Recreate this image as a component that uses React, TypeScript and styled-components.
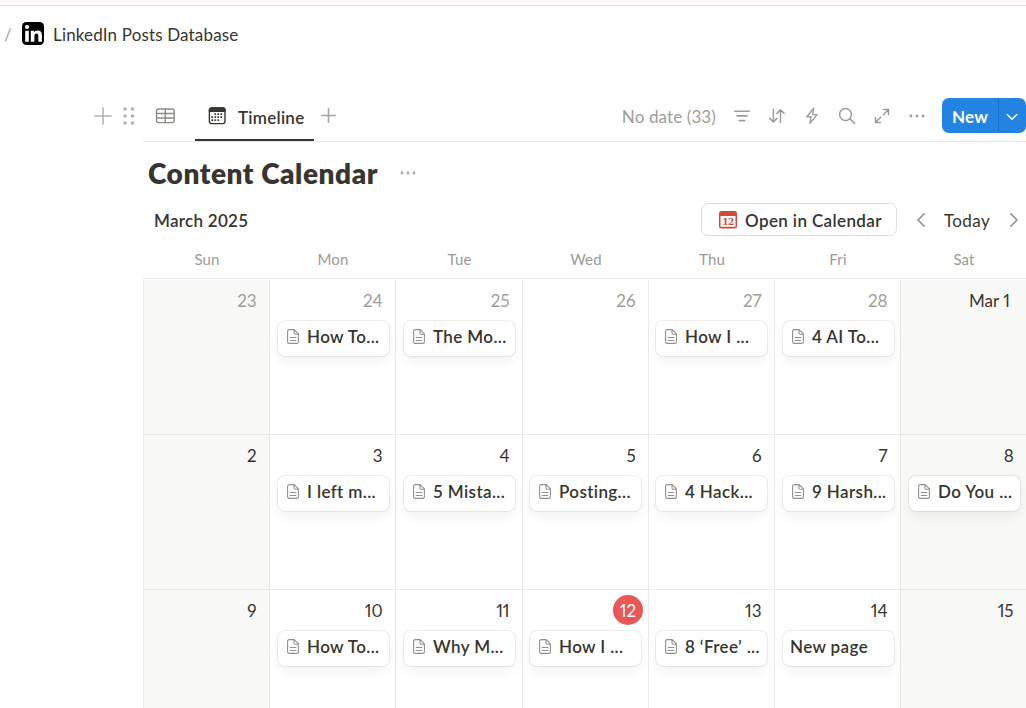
import styled, { createGlobalStyle, css } from "styled-components";

type Entry = { day: string; muted?: boolean; today?: boolean; page?: string; plain?: boolean };

const weekdays = ["Sun", "Mon", "Tue", "Wed", "Thu", "Fri", "Sat"];

const weeks: Entry[][] = [
  [
    { day: "23", muted: true },
    { day: "24", muted: true, page: "How To..." },
    { day: "25", muted: true, page: "The Mo..." },
    { day: "26", muted: true },
    { day: "27", muted: true, page: "How I ..." },
    { day: "28", muted: true, page: "4 AI To..." },
    { day: "Mar 1" },
  ],
  [
    { day: "2" },
    { day: "3", page: "I left m..." },
    { day: "4", page: "5 Mista..." },
    { day: "5", page: "Posting..." },
    { day: "6", page: "4 Hack..." },
    { day: "7", page: "9 Harsh..." },
    { day: "8", page: "Do You ..." },
  ],
  [
    { day: "9" },
    { day: "10", page: "How To..." },
    { day: "11", page: "Why M..." },
    { day: "12", today: true, page: "How I ..." },
    { day: "13", page: "8 ‘Free’ ..." },
    { day: "14", page: "New page", plain: true },
    { day: "15" },
  ],
];

const PlusIcon = ({ size }: { size: number }) => (
  <Icon width={size} height={size} viewBox={`0 0 ${size} ${size}`} strokeWidth="1.6">
    <path d={`M${size / 2} .8v${size - 1.6}M.8 ${size / 2}h${size - 1.6}`} />
  </Icon>
);

const DotsIcon = () => (
  <Icon width="16" height="4" viewBox="0 0 16 4" fill="currentColor" stroke="none">
    <circle cx="2" cy="2" r="1.4" />
    <circle cx="8" cy="2" r="1.4" />
    <circle cx="14" cy="2" r="1.4" />
  </Icon>
);

const PageIcon = () => (
  <Icon width="12" height="15" viewBox="0 0 12 15" strokeWidth="1.1">
    <path d="M2.3.6h4.9l4.2 4.3v7.8c0 1.1-.6 1.7-1.7 1.7H2.3C1.2 14.4.6 13.8.6 12.7V2.3C.6 1.2 1.2.6 2.3.6zM7 .8v3.3c0 .7.4 1.1 1.1 1.1h3.1M3.2 8.5h5.6M3.2 11.5h5.6" />
  </Icon>
);

const Chevron = ({ flip }: { flip?: boolean }) => (
  <ChevronIcon width="8" height="14" viewBox="0 0 8 14" strokeWidth="1.6">
    <path d={flip ? "M.8.8 7 7 .8 13.2" : "M7.2.8 1 7l6.2 6.2"} />
  </ChevronIcon>
);

const App = () => {
  return (
    <Page>
      <GlobalStyle />
      <TopStrip />
      <Breadcrumb>
        <Slash>/</Slash>
        <Logo width="22" height="23" viewBox="0 0 22 23">
          <rect width="22" height="23" rx="4.5" fill="#000" />
          <g fill="#fff">
            <circle cx="5" cy="5" r="2.1" />
            <path d="M3.2 8.7h3.6v11H3.2zM8.8 8.7h3.4v1.5c.7-1.1 1.9-1.8 3.5-1.8 3 0 4.2 1.9 4.2 4.9v6.4h-3.6v-5.8c0-1.6-.4-2.5-1.7-2.5-1.5 0-2.2.9-2.2 2.5v5.8H8.8z" />
          </g>
        </Logo>
        <Crumb>LinkedIn Posts Database</Crumb>
      </Breadcrumb>

      <Toolbar>
        <RowControls>
          <PlusIcon size={18} />
          <Icon width="12" height="18" viewBox="0 0 12 18" fill="currentColor" stroke="none">
            {[2, 9, 16].map((y) => (
              <g key={y}>
                <circle cx="2" cy={y} r="1.8" />
                <circle cx="9.5" cy={y} r="1.8" />
              </g>
            ))}
          </Icon>
        </RowControls>
        <TabBar>
          <TableTab>
            <Icon width="20" height="16" viewBox="0 0 20 16" strokeWidth="1.4">
              <rect x="1.5" y="1" width="17.6" height="13.6" rx="2" />
              <path d="M1.5 5.5h17.6M1.5 10h17.6M10.3 1v13.6" />
            </Icon>
          </TableTab>
          <ActiveTab>
            <Icon width="18" height="18" viewBox="0 0 18 18" strokeWidth="1.4">
              <rect x="1.4" y="1" width="15.6" height="15.6" rx="2.3" />
              <path d="M.8 4.9V3C.8 1.3 1.7.3 3.2.3h12c1.5 0 2.4 1 2.4 2.7v1.9z" fill="currentColor" stroke="none" />
              <g fill="currentColor" stroke="none">
                {[6.3, 9.3, 12.3].map((y, row) =>
                  [3.4, 6.4, 9.4, 12.4].slice(row === 0 ? 1 : 0, row === 2 ? 3 : 4).map((x) => (
                    <rect key={`${x}-${y}`} x={x} y={y} width="1.7" height="1.7" />
                  ))
                )}
              </g>
            </Icon>
            <TabLabel>Timeline</TabLabel>
          </ActiveTab>
          <AddView>
            <PlusIcon size={15} />
          </AddView>
          <Tools>
            <NoDate>No date (33)</NoDate>
            <Tool>
              <Icon width="16" height="14" viewBox="0 0 16 14" strokeWidth="1.6">
                <path d="M.8 2.2h14.4M3 6.9h10M5.3 11.6h5.4" />
              </Icon>
            </Tool>
            <Tool>
              <Icon width="16" height="16" viewBox="0 0 16 16" strokeWidth="1.5">
                <path d="M4.4 1.3v12.5M.8 10.4l3.6 3.6L8 10.4M11.5 14.5V2M7.9 5.4l3.6-3.6 3.6 3.6" />
              </Icon>
            </Tool>
            <Tool>
              <Icon width="14" height="18" viewBox="0 0 14 18" strokeWidth="1.4">
                <path d="M8.7 1.3 1.8 9.8h4.3l-1.2 6.6 7.2-8.8H7.7z" />
              </Icon>
            </Tool>
            <Tool>
              <Icon width="18" height="18" viewBox="0 0 18 18" strokeWidth="1.5">
                <circle cx="7.5" cy="7.5" r="5.9" />
                <path d="m11.9 11.9 4.7 4.5" />
              </Icon>
            </Tool>
            <Tool>
              <Icon width="16" height="16" viewBox="0 0 16 16" strokeWidth="1.5">
                <path d="M9.5 1.6h5v5M14.3 1.8l-5 5M6.5 14.5h-5v-5M1.7 14.3l5-5" />
              </Icon>
            </Tool>
            <Tool>
              <DotsIcon />
            </Tool>
            <NewButton>
              <NewLabel>New</NewLabel>
              <NewMore>
                <Icon width="12" height="8" viewBox="0 0 12 8" strokeWidth="1.6">
                  <path d="M1.2 1.5 6 6.2l4.8-4.7" />
                </Icon>
              </NewMore>
            </NewButton>
          </Tools>
        </TabBar>
      </Toolbar>

      <Content>
        <TitleRow>
          <Title>Content Calendar</Title>
          <DotsIcon />
        </TitleRow>
        <MonthRow>
          <Month>March 2025</Month>
          <OpenButton>
            <svg width="18" height="18" viewBox="0 0 18 18">
              <rect width="18" height="17.5" rx="2.5" fill="#d3483e" />
              <path d="M1.5 5h15v10.8h-15z" fill="#fff" />
              <BadgeText x="9" y="14" textAnchor="middle">
                12
              </BadgeText>
            </svg>
            <OpenLabel>Open in Calendar</OpenLabel>
          </OpenButton>
          <Chevron />
          <Today>Today</Today>
          <Chevron flip />
        </MonthRow>
        <WeekHeader>
          {weekdays.map((name) => (
            <div key={name}>{name}</div>
          ))}
        </WeekHeader>
        <Grid>
          {weeks.map((week) =>
            week.map((entry, i) => (
              <Cell key={entry.day} $weekend={i === 0 || i === 6}>
                <DayRow>
                  <Day $muted={entry.muted} $today={entry.today} $firstOfMonth={entry.day.length > 2}>
                    {entry.day}
                  </Day>
                </DayRow>
                {entry.page && (
                  <Card $plain={entry.plain} $inset={i === 3 || i === 4 ? 7 : 8}>
                    {!entry.plain && <PageIcon />}
                    <span>{entry.page}</span>
                  </Card>
                )}
              </Cell>
            ))
          )}
        </Grid>
      </Content>
    </Page>
  );
};

const GlobalStyle = createGlobalStyle`
  * {
    box-sizing: border-box;
  }
  body {
    margin: 0;
    background: #fff;
    overflow: hidden;
  }
`;

const Page = styled.div`
  width: 1026px;
  height: 708px;
  overflow: hidden;
  color: #37352f;
  font-family: Lato, "Open Sans", sans-serif;
  font-size: 17px;
  line-height: 22px;
`;

const Icon = styled.svg.attrs((p) => ({
  fill: p.fill ?? "none",
  stroke: p.stroke ?? "currentColor",
  strokeLinecap: "round" as const,
  strokeLinejoin: "round" as const,
}))`
  display: block;
  flex-shrink: 0;
`;

const ChevronIcon = styled(Icon)`
  margin-top: 1px;
`;

const TopStrip = styled.div`
  height: 6px;
  background: #fef7f7;
  border-bottom: 1px solid #f3dfe3;
`;

const Breadcrumb = styled.div`
  display: flex;
  align-items: center;
  height: 56px;
  padding: 2px 0 0 4px;
`;

const Logo = styled.svg`
  margin-bottom: 3px;
`;

const Slash = styled.span`
  width: 18px;
  color: #a5a29b;
`;

const Crumb = styled.span`
  margin-left: 9px;
  letter-spacing: 0.16px;
`;

const Toolbar = styled.div`
  display: flex;
  height: 52px;
  margin-top: 28px;
`;

const RowControls = styled.div`
  display: flex;
  gap: 11px;
  width: 143px;
  padding: 17px 0 0 94px;
  color: #b4b3b0;
`;

const TabBar = styled.div`
  display: flex;
  flex: 1;
  border-bottom: 1px solid #e9e9e7;
`;

const TableTab = styled.div`
  width: 52px;
  padding: 18px 0 0 12px;
  color: #8d8c88;
`;

const ActiveTab = styled.div`
  display: flex;
  align-items: center;
  gap: 12px;
  width: 119px;
  height: 51px;
  padding: 3px 0 0 13px;
  border-bottom: 2px solid #37352f;
  font-weight: 600;
`;

const TabLabel = styled.span`
  padding-top: 3px;
  letter-spacing: 0.27px;
`;

const AddView = styled.div`
  padding: 18px 0 0 7px;
  color: #a3a29f;
`;

const Tools = styled.div`
  display: flex;
  align-items: center;
  height: 35px;
  margin: 8px 0 0 auto;
  color: #9d9c98;
`;

const NoDate = styled.div`
  margin-right: 8px;
  padding-top: 2px;
  letter-spacing: 0.12px;
`;

const Tool = styled.div`
  display: flex;
  align-items: center;
  justify-content: center;
  width: 35px;
`;

const NewButton = styled.div`
  display: flex;
  height: 35px;
  margin-left: 8px;
  border-radius: 7px;
  overflow: hidden;
  background: #2383e2;
  color: #fff;
  font-weight: 700;
`;

const NewLabel = styled.div`
  width: 57px;
  padding: 8px 0 0 10px;
  border-right: 1px solid #1d73c9;
  letter-spacing: 0.2px;
`;

const NewMore = styled.div`
  display: flex;
  align-items: center;
  justify-content: center;
  width: 27px;
  padding: 3px 1px 0 0;
`;

const Content = styled.div`
  margin-left: 143px;
`;

const TitleRow = styled.div`
  display: flex;
  align-items: center;
  gap: 22px;
  height: 61px;
  padding-left: 5px;
  color: #a3a29f;
`;

const Title = styled.div`
  padding-top: 1px;
  color: #37352f;
  font-size: 28px;
  font-weight: 800;
  letter-spacing: 0.55px;
  line-height: 34px;
`;

const MonthRow = styled.div`
  display: flex;
  align-items: center;
  height: 34px;
  margin-top: -1px;
  padding: 1px 8px 0 11px;
  color: #91908c;
`;

const Month = styled.div`
  flex: 1;
  padding-top: 3px;
  color: #37352f;
  font-weight: 600;
  letter-spacing: 0.27px;
`;

const OpenButton = styled.div`
  display: flex;
  align-items: center;
  gap: 8px;
  width: 196px;
  height: 33px;
  margin-right: 20px;
  padding-left: 17px;
  border: 1px solid #e0dfdd;
  border-radius: 7px;
  color: #37352f;
  font-weight: 600;
`;

const OpenLabel = styled.span`
  padding-top: 3px;
  letter-spacing: 0.38px;
  white-space: nowrap;
`;

const BadgeText = styled.text`
  fill: #d3483e;
  font: bold 9px "DejaVu Serif", serif;
  letter-spacing: -0.5px;
`;

const Today = styled.div`
  width: 85px;
  padding: 3px 1px 0 0;
  text-align: center;
  color: #37352f;
  letter-spacing: 0.4px;
`;

const WeekHeader = styled.div`
  display: grid;
  grid-template-columns: 126px 126px 127px repeat(4, 126px);
  height: 43px;
  padding: 12px 0 0 1px;
  border-bottom: 1px solid #e9e9e7;
  color: #9b9a97;
  font-size: 15px;
  letter-spacing: 0.15px;
  text-align: center;
`;

const Grid = styled.div`
  display: grid;
  grid-template-columns: 126px 126px 127px repeat(4, 126px);
  grid-auto-rows: 155px;
  margin-top: 1px;
`;

const Cell = styled.div<{ $weekend: boolean }>`
  min-width: 0;
  border-left: 1px solid #e9e9e7;
  border-bottom: 1px solid #e9e9e7;
  background: ${({ $weekend }) => ($weekend ? "#f8f8f7" : "#fff")};
`;

const DayRow = styled.div`
  display: flex;
  justify-content: flex-end;
  height: 41px;
  padding: 5px 5px 0 0;
`;

const Day = styled.div<{ $muted?: boolean; $today?: boolean; $firstOfMonth?: boolean }>`
  padding-right: ${({ $firstOfMonth }) => ($firstOfMonth ? 11 : 7.4)}px;
  color: ${({ $muted }) => ($muted ? "#9f9e9a" : "#37352f")};
  font-variant-numeric: proportional-nums;
  line-height: 32px;
  ${({ $today }) =>
    $today &&
    css`
      width: 30px;
      height: 30px;
      padding: 0;
      border-radius: 50%;
      background: #eb5757;
      color: #fff;
      text-align: center;
    `}
`;

const Card = styled.div<{ $plain?: boolean; $inset: number }>`
  display: flex;
  align-items: center;
  gap: 8px;
  width: 111px;
  height: 35px;
  margin-left: ${({ $inset }) => $inset}px;
  padding: 0 0 4px ${({ $plain }) => ($plain ? 7 : 9)}px;
  border-radius: 7px;
  background: #fff;
  box-shadow: 0 0 0 1px rgba(84, 72, 49, 0.09), 0 6px 14px -2px rgba(0, 0, 0, 0.07);
  font-weight: 600;
  letter-spacing: 0.38px;
  line-height: 20px;
  white-space: nowrap;

  svg {
    color: #91908c;
  }
`;

export default App;
